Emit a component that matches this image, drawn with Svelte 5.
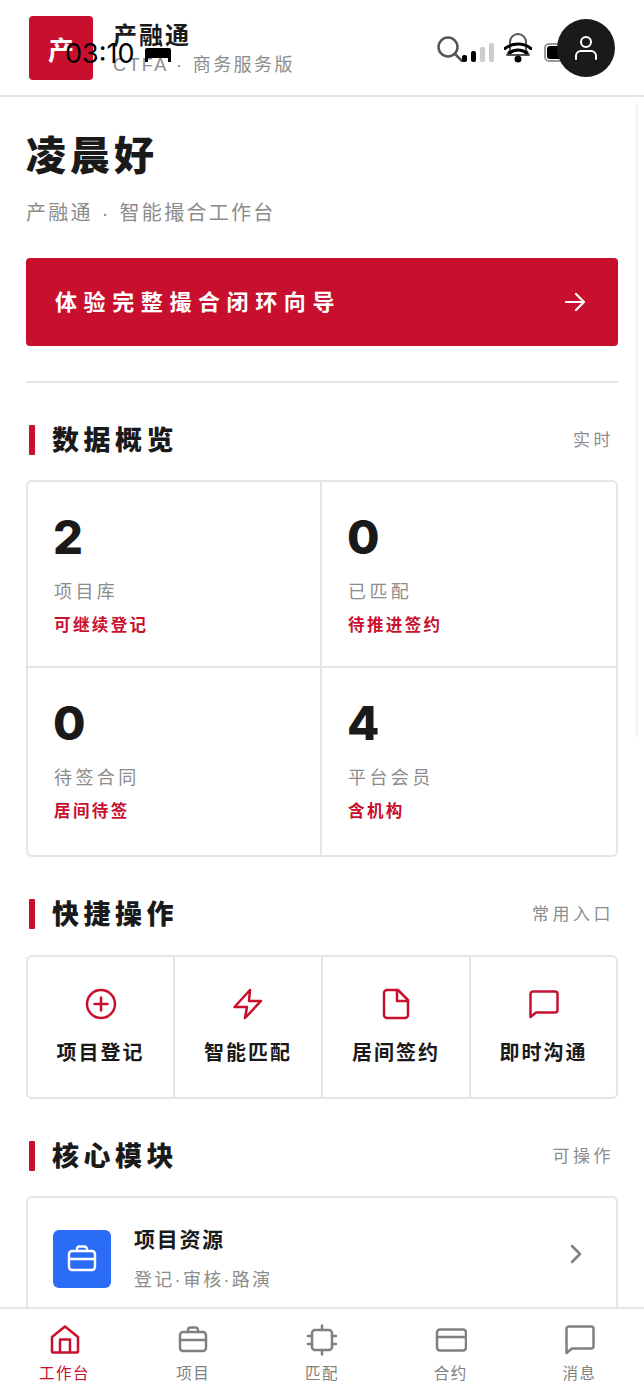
<script>
  const stats = [
    { n: '2', label: '项目库', note: '可继续登记' },
    { n: '0', label: '已匹配', note: '待推进签约' },
    { n: '0', label: '待签合同', note: '居间待签' },
    { n: '4', label: '平台会员', note: '含机构' }
  ];
  const tabs = [
    { key: 'home', label: '工作台', active: true },
    { key: 'case', label: '项目' },
    { key: 'chip', label: '匹配' },
    { key: 'card', label: '合约' },
    { key: 'msg', label: '消息' }
  ];
</script>

{#snippet brief()}
  <rect x="3" y="8" width="26" height="19" rx="3" />
  <path d="M11 8V6a2.500 2.500 0 0 1 2.500-2.500h5A2.500 2.500 0 0 1 21 6v2M3 16h26" />
{/snippet}

<div class="phone">
  <header class="top">
    <div class="logo">产</div>
    <div class="brand">
      <div class="brand-name">产融通</div>
      <div class="brand-sub">CTFA · 商务服务版</div>
    </div>
    <div class="top-right">
      <svg class="search" viewBox="0 0 28 28" width="28" height="28"><circle cx="11" cy="11" r="9.500" /><path d="M18 18l7 7" /></svg>
      <div class="avatar">
        <svg viewBox="0 0 24 24" width="24" height="24"><circle cx="12" cy="6" r="5" /><path d="M2 23v-3a5 5 0 0 1 5-5h10a5 5 0 0 1 5 5v3" /></svg>
      </div>
    </div>
  </header>

  <div class="status">
    <span class="time">03:10</span>
    <svg class="bed" viewBox="0 0 26 14" width="26" height="14"><path d="M2 0h22a2 2 0 0 1 2 2v12h-3v-4H3v4H0V2a2 2 0 0 1 2-2z" /></svg>
    <span class="signal"><i class="on s1"></i><i class="on s2"></i><i class="s3"></i><i class="s4"></i></span>
    <svg class="wifi" viewBox="0 0 28 32" width="28" height="32">
      <path class="bell" d="M3 22h22l-3-5V9a8 8 0 0 0-16 0v8z" />
      <path class="arc" d="M1 15.500c7.500-6 18.500-6 26 0M5.500 20c5-4 12-4 17 0" />
      <circle cx="14" cy="26" r="3.500" />
    </svg>
    <span class="batt"><i></i></span>
  </div>

  <div class="scrollbar"></div>

  <main class="body">
    <h1>凌晨好</h1>
    <p class="sub">产融通 · 智能撮合工作台</p>
    <button class="cta">
      <span>体验完整撮合闭环向导</span>
      <svg viewBox="0 0 24 24" width="24" height="24"><path d="M3 12h18M13 4l8 8-8 8" /></svg>
    </button>
    <div class="rule"></div>

    <section class="head first">
      <h2>数据概览</h2><span>实时</span>
    </section>
    <div class="stats">
      {#each stats as s}
        <div class="stat">
          <div class="num">{s.n}</div>
          <div class="lab">{s.label}</div>
          <div class="note">{s.note}</div>
        </div>
      {/each}
    </div>

    <section class="head">
      <h2>快捷操作</h2><span>常用入口</span>
    </section>
    <div class="quick">
      <div class="q">
        <svg viewBox="0 0 32 32" width="32" height="32"><circle cx="16" cy="16" r="14" /><path d="M16 9.500v13M9.500 16h13" /></svg>
        <span>项目登记</span>
      </div>
      <div class="q">
        <svg viewBox="0 0 32 32" width="32" height="32"><path d="M18 2L2.500 19H15l-2 11 16-17H17z" /></svg>
        <span>智能匹配</span>
      </div>
      <div class="q">
        <svg viewBox="0 0 32 32" width="32" height="32"><path d="M18 2H7a3 3 0 0 0-3 3v22a3 3 0 0 0 3 3h18a3 3 0 0 0 3-3V12z" /><path d="M17 2v11h11" /></svg>
        <span>居间签约</span>
      </div>
      <div class="q">
        <svg viewBox="0 0 32 32" width="32" height="32"><path d="M2.500 29V6a2.500 2.500 0 0 1 2.500-2.500h22A2.500 2.500 0 0 1 29.500 6v16a2.500 2.500 0 0 1-2.500 2.500H8z" /></svg>
        <span>即时沟通</span>
      </div>
    </div>

    <section class="head">
      <h2>核心模块</h2><span>可操作</span>
    </section>
    <div class="module">
      <div class="m-icon">
        <svg viewBox="0 0 32 32" width="32" height="32">{@render brief()}</svg>
      </div>
      <div class="m-text">
        <div class="m-title">项目资源</div>
        <div class="m-sub">登记·审核·路演</div>
      </div>
      <svg class="chev" viewBox="0 0 12 20" width="12" height="20"><path d="M2 2l8 8-8 8" /></svg>
    </div>
  </main>

  <nav class="tabs">
    {#each tabs as t}
      <div class="tab" class:active={t.active}>
        <svg viewBox="0 0 32 32" width="32" height="32">
          {#if t.key === 'home'}
            <path d="M4 13L17 2.500 30 13v14.500a1 1 0 0 1-1 1H5a1 1 0 0 1-1-1z" /><path d="M12 28V15.500h10V28" />
          {:else if t.key === 'case'}
            {@render brief()}
          {:else if t.key === 'chip'}
            <rect x="6" y="6" width="20" height="20" rx="3" /><path d="M16 1.500V6M16 26v4.500M2 12h4M2 20h4M26 12h4M26 20h4" />
          {:else if t.key === 'card'}
            <rect x="2" y="5.500" width="29" height="21" rx="3" /><path d="M2 13h29" />
          {:else}
            <path d="M2.500 29V5a2.500 2.500 0 0 1 2.500-2.500h22A2.500 2.500 0 0 1 29.500 5v17a2.500 2.500 0 0 1-2.500 2.500H8z" />
          {/if}
        </svg>
        <span>{t.label}</span>
      </div>
    {/each}
  </nav>
</div>

<style>
  :global(body) { margin: 0; background: #fff; }
  .phone {
    position: relative;
    width: 644px;
    height: 1400px;
    display: flex;
    flex-direction: column;
    overflow: hidden;
    background: #fff;
    color: #1a1a1a;
    font-family: "Liberation Sans", "Noto Sans CJK SC", sans-serif;
  }
  svg { fill: none; stroke: currentColor; stroke-linecap: round; stroke-linejoin: round; display: block; flex: none; }

  .top {
    flex: none;
    border-bottom: 2px solid #e5e5e5;
    display: flex;
    align-items: flex-start;
    padding: 16px 29px 0;
    box-sizing: content-box;
    height: 79px;
  }
  .logo {
    width: 64px; height: 64px;
    background: #c8102e;
    border-radius: 4px;
    color: #fff;
    font-size: 26px;
    font-weight: 700;
    display: flex; align-items: center; justify-content: center;
  }
  .brand { margin-left: 20px; padding-top: 3px; }
  .brand-name { font-size: 24px; font-weight: 700; line-height: 34px; letter-spacing: 2px; }
  .brand-sub { font-size: 18px; line-height: 24px; color: #8c8c8c; letter-spacing: 2.400px; word-spacing: 1px; margin-top: 0; white-space: nowrap; }
  .top-right { margin-left: auto; display: flex; align-items: flex-start; }
  .search { margin-top: 20px; stroke: #555; stroke-width: 2.500; margin-right: 92px; }
  .avatar {
    width: 58px; height: 58px; border-radius: 50%;
    background: #1a1a1a; color: #fff;
    display: flex; align-items: center; justify-content: center;
    margin-top: 3px;
    position: relative; z-index: 3;
  }
  .avatar svg { stroke-width: 2; }

  .status { position: absolute; left: 0; top: 0; width: 644px; height: 96px; pointer-events: none; z-index: 2; }
  .time { position: absolute; left: 65px; top: 37px; font: 400 27px/34px "Inter", sans-serif; color: #000; }
  .bed { position: absolute; left: 145px; top: 48px; fill: #000; stroke: none; }
  .signal { position: absolute; left: 462px; top: 43px; display: flex; align-items: flex-end; gap: 4px; height: 19px; }
  .signal i { display: block; width: 5px; background: #ccc; border-radius: 2px; }
  .signal .on { background: #000; }
  .s1 { height: 7px; } .s2 { height: 11px; } .s3 { height: 15px; } .s4 { height: 19px; }
  .wifi { position: absolute; left: 504px; top: 33px; color: #000; }
  .wifi .bell { stroke: #555; stroke-width: 2; }
  .wifi .arc { stroke-width: 3; stroke: #000; }
  .wifi circle { fill: #000; stroke: none; }
  .batt { position: absolute; left: 544px; top: 43px; width: 32px; height: 15px; border: 2px solid #999; border-radius: 5px; box-sizing: content-box; }
  .batt i { display: block; width: 29px; height: 13px; margin: 1px 0 0 1px; background: #000; border-radius: 3px; }

  .scrollbar { position: absolute; left: 635px; top: 102px; width: 4px; height: 636px; background: #f8f8f8; border-radius: 2px; }

  .body { flex: 1; min-height: 0; overflow: hidden; padding: 0 26px; }
  h1 { margin: 28px 0 0; font-size: 40px; font-weight: 900; line-height: 62px; letter-spacing: 4px; }
  .sub { margin: 11px 0 0; font-size: 20px; line-height: 30px; color: #8c8c8c; letter-spacing: 2.300px; word-spacing: 1px; }
  .cta {
    width: 100%; height: 88px; margin-top: 30px; padding: 0 31px 0 29px;
    border: 0; border-radius: 4px; background: #c8102e; color: #fff;
    display: flex; align-items: center; justify-content: space-between;
    font: 700 22px/30px "Noto Sans CJK SC", sans-serif; letter-spacing: 6.600px;
  }
  .cta span { position: relative; top: -2px; }
  .cta svg { stroke-width: 2.200; }
  .rule { height: 2px; background: #e5e5e5; margin-top: 35px; }

  .head { display: flex; align-items: center; justify-content: space-between; height: 30px; margin-top: 43px; padding-right: 4px; }
  h2 {
    margin: 0; padding-left: 26px; position: relative;
    font-size: 27px; line-height: 30px; font-weight: 900; letter-spacing: 4.500px;
  }
  h2::before { content: ""; position: absolute; left: 3px; top: -1px; width: 6px; height: 30px; background: #c8102e; border-radius: 1px; }
  .head span { font-size: 17px; line-height: 24px; color: #8c8c8c; letter-spacing: 3.500px; }

  .stats {
    display: grid; grid-template-columns: 294px 1fr; grid-template-rows: 186px 187px;
    margin-top: 24px; border: 2px solid #e5e5e5; border-radius: 6px; box-sizing: content-box;
  }
  .stat { padding: 26px 0 0 26px; box-sizing: border-box; min-width: 0; }
  .stat:nth-child(odd) { border-right: 2px solid #e5e5e5; }
  .stat:nth-child(-n+2) { border-bottom: 2px solid #e5e5e5; }
  .num { font: 800 47px/58px "Inter", sans-serif; color: #1a1a1a; margin-left: -1px; }
  .lab { font-size: 18px; line-height: 26px; color: #8c8c8c; letter-spacing: 3.400px; margin-top: 13px; }
  .note { font-size: 16.500px; line-height: 24px; font-weight: 700; color: #c8102e; letter-spacing: 2.400px; margin-top: 8px; }

  .quick {
    display: grid; grid-template-columns: 145px 148px 148px 1fr;
    margin-top: 25px; border: 2px solid #e5e5e5; border-radius: 6px; height: 140px; box-sizing: content-box;
  }
  .q { display: flex; flex-direction: column; align-items: center; padding-top: 31px; color: #c8102e; box-sizing: border-box; min-width: 0; }
  .q + .q { border-left: 2px solid #e5e5e5; }
  .q svg { stroke-width: 2.500; }
  .q span { margin-top: 18px; color: #1a1a1a; font-size: 20px; line-height: 30px; font-weight: 700; letter-spacing: 2px; }

  .module {
    margin-top: 24px; height: 160px; box-sizing: border-box;
    border: 2px solid #e5e5e5; border-radius: 6px;
    display: flex; align-items: flex-start; padding: 32px 34px 0 25px;
  }
  .m-icon { width: 58px; height: 58px; border-radius: 6px; background: #2b6cf6; color: #fff; display: flex; align-items: center; justify-content: center; }
  .m-icon svg { stroke-width: 2.400; }
  .m-text { margin-left: 23px; flex: 1; margin-top: -5px; }
  .m-title { font-size: 21px; line-height: 30px; font-weight: 700; letter-spacing: 1.700px; }
  .m-sub { font-size: 18px; line-height: 26px; color: #8c8c8c; letter-spacing: 2.300px; margin-top: 12px; }
  .chev { color: #808080; stroke-width: 2.500; margin-top: 14px; }

  .tabs {
    flex: none; height: 93px; box-sizing: border-box;
    border-top: 2px solid #e5e5e5; background: #fff;
    display: grid; grid-template-columns: repeat(5, 1fr);
    position: relative; z-index: 1;
  }
  .tab { display: flex; flex-direction: column; align-items: center; padding-top: 15px; color: #808080; }
  .tab.active { color: #c8102e; }
  .tab svg { stroke-width: 2.500; }
  .tab span { font-size: 15.500px; line-height: 22px; letter-spacing: 1.500px; margin-top: 7px; }
</style>
